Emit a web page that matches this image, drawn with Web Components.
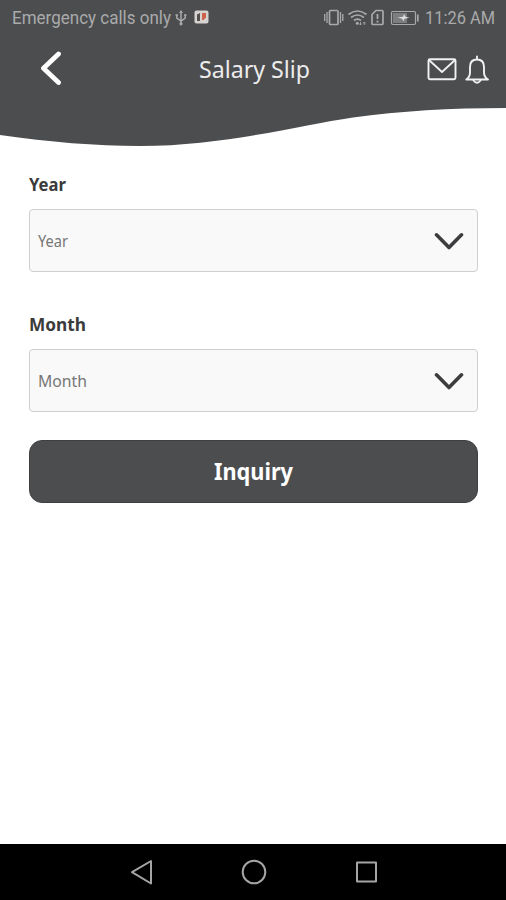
<!DOCTYPE html>
<html lang="en">
<head>
<meta charset="utf-8">
<title>Salary Slip</title>
<style>
html,body{margin:0;height:100%;background:#fff;overflow:hidden}
body{font-family:"Noto Sans","Open Sans",sans-serif}
</style>
</head>
<body>
<salary-screen></salary-screen>
<script>
const define = (name, html, setup) => customElements.define(name, class extends HTMLElement {
  connectedCallback() {
    if (this.shadowRoot) return;
    this.attachShadow({ mode: 'open' }).innerHTML = html;
    if (setup) setup(this);
  }
});

// Single line of text condensed or widened to the width given in pixels.
define('fit-text', `<style>
:host{display:block;white-space:nowrap;flex:none}
span{display:inline-block;transform-origin:0 50%}
</style><span></span>`, el => {
  const span = el.shadowRoot.querySelector('span');
  span.textContent = el.getAttribute('text');
  const w = +el.getAttribute('width');
  el.style.width = w + 'px';
  span.style.transform = `scaleX(${w / span.getBoundingClientRect().width})`;
});

define('status-bar', `<style>
:host{display:flex;align-items:center;height:36px;box-sizing:border-box;padding:0 11px 0 12px;color:#a9aaab;font:17.5px/36px Roboto,sans-serif}
svg{display:block;flex:none;fill:none;stroke:#a9aaab;stroke-width:1.700}
.usb{margin-left:4px}.app{margin-left:7px;margin-top:-2px}.icons{margin-left:auto;margin-right:6px}
</style>
<fit-text text="Emergency calls only" width="159"></fit-text>
<svg class="usb" width="12" height="18" viewBox="0 0 12 18"><path d="M6 3v11M1.800 6v3L6 12l4.200-3V6" stroke-width="1.500"/><path d="M6 1l2 3H4z" fill="#a9aaab" stroke="none"/><circle cx="6" cy="14.800" r="1.600" fill="#a9aaab" stroke="none"/><path d="M.5 6h2.500M9 6h2.500"/></svg>
<svg class="app" width="15" height="14" viewBox="0 0 15 14"><rect x=".5" y=".5" width="14" height="13" rx="2" fill="#d5d2cf" stroke="none"/><path d="M3 4.500l3-1.500v8H3z" fill="#55504e" stroke="none"/><path d="M8 3h4v4.500L9.500 10H8z" fill="#cf604a" stroke="none"/></svg>
<svg class="icons" width="96" height="18" viewBox="323 9 96 18">
<rect x="329.500" y="10.500" width="8.500" height="14" rx="1"/><path d="M327 12v11M324.700 14v7M340.500 12v11M342.800 14v7" stroke-width="1.300"/>
<path d="M348.500 14.500q9-7 18 0M351 17.500q6.500-5 13 0M354 20.500q3.500-2.700 7 0"/><circle cx="357.300" cy="23.300" r="1.500" fill="#a9aaab" stroke="none"/><path d="M360.500 22v3M359.300 23.700l1.200 1.300 1.200-1.300M364.300 25v-3M363.100 23.300l1.200-1.300 1.200 1.300" stroke-width=".9"/>
<path d="M376 10.500h6q1 0 1 1v12q0 1-1 1h-9q-1 0-1-1v-9z"/><path d="M377.500 14v5M377.500 20.500v2" stroke-width="1.800"/>
<rect x="391.500" y="11.500" width="24" height="13" rx="1.500" stroke-width="1.200"/><path d="M393 13h14v10h-14z" fill="#7d7e80" stroke="none"/><path d="M417.800 14.500v7" stroke-width="1.700"/><path d="M397.500 17.500l5.500-.7 1-2.800 1.500 2.800 4 1-5 .9-1 2.500-1.500-2.500z" fill="#dedede" stroke="none"/>
</svg>
<fit-text text="11:26 AM" width="70"></fit-text>`);

define('title-bar', `<style>
:host{display:grid;grid-template-columns:1fr auto 1fr;align-items:center;height:66px;box-sizing:border-box;padding:0 16px 0 39px;color:#ececec;font-size:24px;line-height:34px}
svg{display:block;fill:none;stroke:#f1f1f1;stroke-linecap:round;stroke-linejoin:round}
.actions{justify-self:end;display:flex;align-items:center;gap:8px}
fit-text{margin-left:-21px}
</style>
<svg width="24" height="36" viewBox="39 51 24 36"><path d="M58.500 54L43.500 68.300l15 14.200" stroke="#fff" stroke-width="4.800"/></svg>
<fit-text text="Salary Slip" width="111"></fit-text>
<div class="actions">
<svg width="30" height="30" viewBox="427 54 30 30"><rect x="428.500" y="59.300" width="27" height="20" rx="1.500" stroke-width="1.900"/><path d="M429 60l13 12 13-12" stroke-width="1.800"/></svg>
<svg width="25" height="32" viewBox="465 53 25 32" stroke-width="1.900"><path d="M477 56.500v2.500M466.300 79.500c2.800-2 3.700-4 3.700-7v-5.500q0-7.500 7-7.500t7 7.500v5.500c0 3 1 5 4 7z"/><path d="M473.500 80.500q3.500 4.500 7 0"/></svg>
</div>`);

define('app-header', `<style>
:host{display:grid;height:148px;flex:none}
svg,div{grid-area:1/1;min-width:0}
svg{display:block}
div{z-index:1}
</style>
<svg width="506" height="148"><path d="M0 0H506V108C450 108 400 111 353 117.500C300 125 225 146 140 146C95 146 50 142 0 135Z" fill="#4c4d4f"/></svg>
<div><slot></slot></div>`);

define('select-field', `<style>
:host{display:block;color:#3b3b3c}
.label{font-size:18px;line-height:24px;font-weight:700;height:37px;padding-left:.5px}
.box{display:flex;align-items:center;justify-content:space-between;height:63px;box-sizing:border-box;border:1.500px solid #cfcfcf;border-radius:4px;background:#f9f9f9;padding:0 13px 0 8px;font-size:16px;line-height:24px;font-weight:400;color:#777}
svg{display:block;fill:none;stroke:#3d3d3f;stroke-width:3.600;stroke-linecap:round;stroke-linejoin:round}
</style>
<div class="label"></div>
<div class="box"><svg width="30" height="20" viewBox="0 0 30 20"><path d="M2.500 3.800L15 16.500 27.500 3.800"/></svg></div>`, el => {
  const name = el.getAttribute('name');
  const make = w => {
    const t = document.createElement('fit-text');
    t.setAttribute('text', name);
    t.setAttribute('width', w);
    return t;
  };
  el.shadowRoot.querySelector('.label').append(make(el.getAttribute('label-width')));
  el.shadowRoot.querySelector('.box').prepend(make(el.getAttribute('value-width')));
});

define('primary-button', `<style>
:host{display:flex;align-items:center;justify-content:center;height:63px;box-sizing:border-box;border-radius:13px;background:#4c4d4f;border:1px solid #3e3f41;padding:0 0 2px 1px;color:#fff;font-size:24px;line-height:34px;font-weight:700}
</style><slot></slot>`);

define('nav-bar', `<style>
:host{display:flex;align-items:center;justify-content:center;gap:86px;height:56px;padding-left:1px;box-sizing:border-box;flex:none;background:#000}
svg{display:block;fill:none;stroke:#a5a5a5;stroke-width:2;stroke-linejoin:round}
</style>
<svg width="26" height="26" viewBox="0 0 26 26"><path d="M22 2v22.500L3 13.200z"/></svg>
<svg width="26" height="26" viewBox="0 0 26 26"><circle cx="13" cy="13" r="11.300"/></svg>
<svg width="26" height="26" viewBox="0 0 26 26"><path d="M4 3.500h19v19h-19z"/></svg>`);

define('salary-screen', `<style>
:host{display:flex;flex-direction:column;width:506px;height:900px;background:#fff}
main{flex:1;padding:24px 28px 0 28.500px}
select-field + select-field{margin-top:40px}
primary-button{margin-top:28px}
</style>
<app-header><status-bar></status-bar><title-bar></title-bar></app-header>
<main>
<select-field name="Year" label-width="37" value-width="30"></select-field>
<select-field name="Month" label-width="57" value-width="49"></select-field>
<primary-button><fit-text text="Inquiry" width="79"></fit-text></primary-button>
</main>
<nav-bar></nav-bar>`);
</script>
</body>
</html>
